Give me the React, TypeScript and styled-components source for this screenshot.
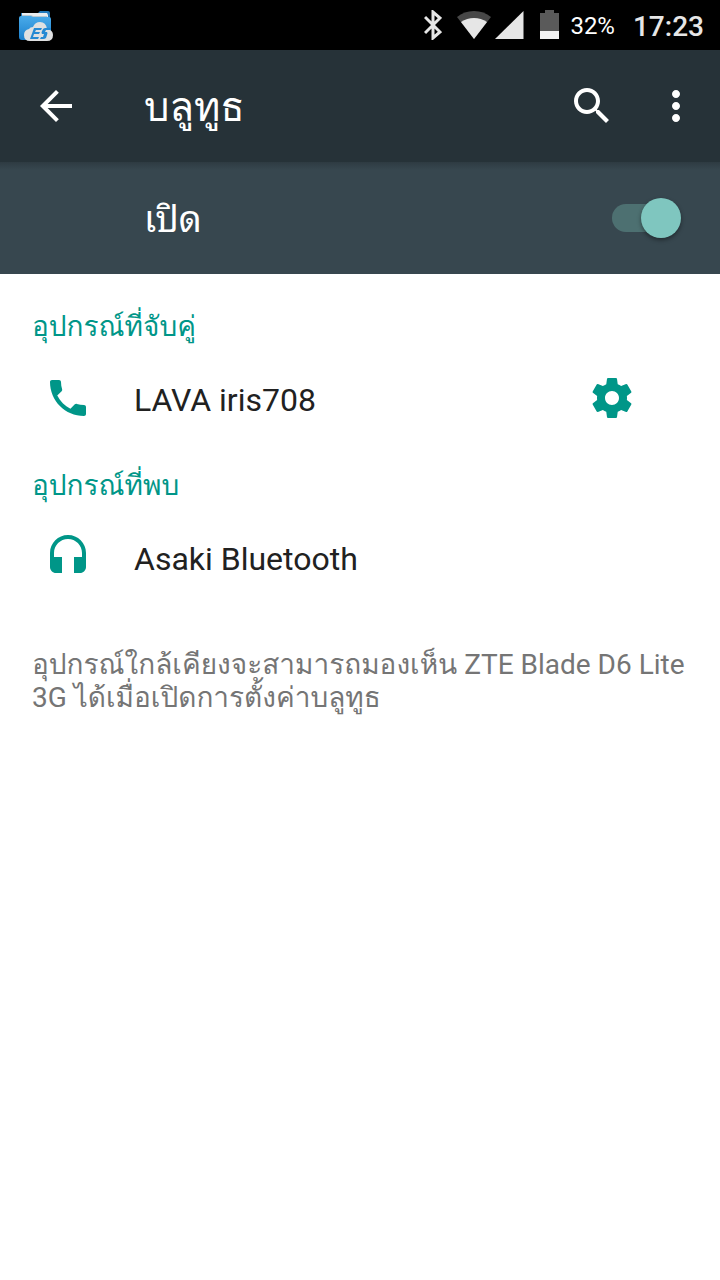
import React, { useState } from "react";
import styled, { createGlobalStyle } from "styled-components";

const GlobalStyle = createGlobalStyle`
  *, *::before, *::after { box-sizing: border-box; }
  body {
    margin: 0;
    background: #ffffff;
    color: #212121;
    font-family: Roboto, Loma, sans-serif;
  }
`;

const Screen = styled.div`
  min-height: 100vh;
  display: flex;
  flex-direction: column;
`;

const StatusBar = styled.div`
  display: flex;
  align-items: center;
  height: 50px;
  padding: 0 16px 0 19px;
  background: #000000;
  color: #e6e6e6;
`;

const StatusIcons = styled.div`
  display: flex;
  align-items: center;
  margin-left: auto;
`;

const StatusGlyph = styled.svg<{ $gap: number }>`
  display: block;
  flex: none;
  margin-right: ${(p) => p.$gap}px;
`;

const BatteryText = styled.span`
  margin-right: 18px;
  padding-top: 2px;
  font-size: 24px;
  line-height: 28px;
  color: #ffffff;
`;

const Clock = styled.time`
  padding-top: 4px;
  font-size: 28px;
  font-weight: 500;
  line-height: 32px;
`;

const AppBar = styled.header`
  display: flex;
  align-items: center;
  height: 112px;
  padding: 0 20px 0 32px;
  background: #263238;
  color: #ffffff;
`;

const Title = styled.h1`
  flex: 1;
  margin: 0 0 0 64px;
  padding-top: 4px;
  font-size: 40px;
  font-weight: 400;
  line-height: 48px;
`;

const IconButton = styled.button<{ $gap?: number; $color?: string }>`
  display: block;
  flex: none;
  width: 48px;
  height: 48px;
  margin: 0 ${(p) => p.$gap ?? 0}px 0 0;
  padding: 0;
  border: 0;
  background: none;
  color: ${(p) => p.$color ?? "inherit"};
  cursor: pointer;
`;

const SwitchBar = styled.label`
  display: flex;
  align-items: center;
  justify-content: space-between;
  height: 112px;
  padding: 0 38px 0 144px;
  background: linear-gradient(#2e3b42, #37474f 8px);
  color: #ffffff;
  cursor: pointer;
`;

const SwitchText = styled.span`
  padding-top: 4px;
  font-family: Roboto, "Noto Sans Thai Looped", Loma, sans-serif;
  font-size: 36px;
  line-height: 44px;
`;

const Toggle = styled.input`
  appearance: none;
  display: flex;
  align-items: center;
  width: 70px;
  height: 28px;
  margin: 0;
  border-radius: 14px;
  background: linear-gradient(#4d7071, #4d7071) left / 60px 28px no-repeat;
  cursor: pointer;

  &::before {
    content: "";
    flex: none;
    width: 40px;
    height: 40px;
    border-radius: 50%;
    background: #b9b9b9;
    box-shadow: 0 2px 4px rgba(0, 0, 0, 0.4);
  }

  &:checked::before {
    margin-left: 29px;
    background: #7fc6bf;
  }
`;

const Content = styled.main`
  display: flex;
  flex-direction: column;
`;

const Section = styled.section`
  padding: 33px 32px 0;

  & + & {
    padding-top: 18px;
  }
`;

const SectionTitle = styled.h2`
  margin: 0;
  color: #009688;
  font-size: 28px;
  font-weight: 400;
  line-height: 40px;
`;

const DeviceRow = styled.div`
  display: flex;
  align-items: center;
  height: 101px;
  padding: 0 52px 0 12px;
`;

const DeviceButton = styled.button`
  display: flex;
  align-items: center;
  flex: 1;
  gap: 42px;
  padding: 0;
  border: 0;
  background: none;
  color: #212121;
  font: inherit;
  font-size: 32px;
  line-height: 40px;
  text-align: left;
  cursor: pointer;
`;

const DeviceName = styled.span`
  padding-top: 4px;
`;

const Note = styled.p`
  margin: 41px 32px;
  color: #757575;
  font-size: 28px;
  line-height: 33px;
`;

const Icon = ({ d, color = "currentColor" }: { d: string; color?: string }) => (
  <svg width="48" height="48" viewBox="0 0 24 24" fill={color} aria-hidden="true">
    <path d={d} />
  </svg>
);

const paths = {
  back: "M20 11H7.83l5.59-5.59L12 4l-8 8 8 8 1.41-1.41L7.83 13H20v-2z",
  search:
    "M15.5 14h-.79l-.28-.27C15.41 12.59 16 11.11 16 9.5 16 5.91 13.09 3 9.5 3S3 5.91 3 9.5 5.91 16 9.5 16c1.61 0 3.09-.59 4.23-1.57l.27.28v.79l5 4.99L20.49 19l-4.99-5zm-6 0C7.01 14 5 11.99 5 9.5S7.01 5 9.5 5 14 7.01 14 9.5 11.99 14 9.5 14z",
  more: "M12 8c1.1 0 2-.9 2-2s-.9-2-2-2-2 .9-2 2 .9 2 2 2zm0 2c-1.1 0-2 .9-2 2s.9 2 2 2 2-.9 2-2-.9-2-2-2zm0 6c-1.1 0-2 .9-2 2s.9 2 2 2 2-.9 2-2-.9-2-2-2z",
  phone:
    "M6.62 10.79c1.44 2.83 3.76 5.14 6.59 6.59l2.2-2.2c.27-.27.67-.36 1.02-.24 1.12.37 2.33.57 3.57.57.55 0 1 .45 1 1V20c0 .55-.45 1-1 1-9.39 0-17-7.61-17-17 0-.55.45-1 1-1h3.5c.55 0 1 .45 1 1 0 1.25.2 2.45.57 3.57.11.35.03.74-.25 1.02l-2.2 2.2z",
  headset:
    "M12 1c-4.97 0-9 4.03-9 9v7c0 1.66 1.34 3 3 3h3v-8H5v-2c0-3.87 3.13-7 7-7s7 3.13 7 7v2h-4v8h3c1.66 0 3-1.34 3-3v-7c0-4.97-4.03-9-9-9z",
  settings:
    "M19.43 12.98c.04-.32.07-.64.07-.98s-.03-.66-.07-.98l2.11-1.65c.19-.15.24-.42.12-.64l-2-3.46c-.12-.22-.39-.3-.61-.22l-2.49 1c-.52-.4-1.08-.73-1.69-.98l-.38-2.65C14.46 2.18 14.25 2 14 2h-4c-.25 0-.46.18-.49.42l-.38 2.65c-.61.25-1.17.59-1.69.98l-2.49-1c-.23-.09-.49 0-.61.22l-2 3.46c-.13.22-.07.49.12.64l2.11 1.65c-.04.32-.07.65-.07.98s.03.66.07.98l-2.11 1.65c-.19.15-.24.42-.12.64l2 3.46c.12.22.39.3.61.22l2.49-1c.52.4 1.08.73 1.69.98l.38 2.65c.03.24.24.42.49.42h4c.25 0 .46-.18.49-.42l.38-2.65c.61-.25 1.17-.59 1.69-.98l2.49 1c.23.09.49 0 .61-.22l2-3.46c.12-.22.07-.49-.12-.64l-2.11-1.65zM12 15.5c-1.93 0-3.5-1.57-3.5-3.5s1.57-3.5 3.5-3.5 3.5 1.57 3.5 3.5-1.57 3.5-3.5 3.5z",
};

const FileExplorerIcon = () => (
  <StatusGlyph $gap={0} width="36" height="32" viewBox="0 0 36 32" aria-hidden="true">
    <defs>
      <linearGradient id="folder" x1="0" y1="0" x2="0" y2="1">
        <stop offset="0" stopColor="#4aabea" />
        <stop offset="1" stopColor="#1c80cd" />
      </linearGradient>
    </defs>
    <path d="M2 4h17l2-2h8q2 0 2 2v20H2z" fill="#2279bb" />
    <path d="M3 4h25l1 2v4H3z" fill="#e9edf0" />
    <path d="M3 6h9l2 1h14v2H3z" fill="#b9c8d2" />
    <path d="M0 9q0-2 2-2h10l2 1h16q2 0 2 2v17q0 4-3 4H3q-3 0-3-3z" fill="url(#folder)" />
    <path d="M11 32q-6 0-6-6 0-5 5-6 1-2 4-2 2-5 7-5 6 0 7 7 6 1 6 6 0 6-6 6z" fill="#dfe0e1" />
    <path d="M15 19h8l-1 2h-5l-1 2h5l-1 2h-5l-1 3h6l-1 2h-8zM26 19h6l-1 2h-4l-1 2h2q1 1 0 3l-1 3q-1 1-3 1h-3l1-2h2l1-3h-2q-1-1 0-3 1-3 3-3z" fill="#2589d3" />
  </StatusGlyph>
);

export default function App() {
  const [on, setOn] = useState(true);
  return (
    <>
      <GlobalStyle />
      <Screen>
        <StatusBar>
          <FileExplorerIcon />
          <StatusIcons>
            <StatusGlyph $gap={15} width="18" height="30" viewBox="0 0 18 30" aria-label="Bluetooth">
              <path d="M1 7l15 15-7 6V2l7 6L1 23" fill="none" stroke="#e6e6e6" strokeWidth="3" />
            </StatusGlyph>
            <StatusGlyph $gap={4} width="34" height="30" viewBox="0 0 34 30" aria-label="Wi-Fi">
              <path d="M17 29L0 7Q7 1 17 1t17 6z" fill="#474747" />
              <path d="M17 29L4 12q6-4 13-4t13 4z" fill="#e6e6e6" />
            </StatusGlyph>
            <StatusGlyph $gap={16} width="29" height="30" viewBox="0 0 29 30" aria-label="Signal">
              <path d="M0 29L28.5 1v28z" fill="#e6e6e6" />
            </StatusGlyph>
            <StatusGlyph $gap={11} width="19" height="30" viewBox="0 0 19 30" aria-label="Battery">
              <path d="M0 3h5V0h9v3h5v26H0z" fill="#5a5a5a" />
              <path d="M0 21h19v8H0z" fill="#f2f2f2" />
            </StatusGlyph>
            <BatteryText>32%</BatteryText>
            <Clock>17:23</Clock>
          </StatusIcons>
        </StatusBar>

        <AppBar>
          <IconButton aria-label="Back">
            <Icon d={paths.back} />
          </IconButton>
          <Title>บลูทูธ</Title>
          <IconButton $gap={36} aria-label="Search">
            <Icon d={paths.search} />
          </IconButton>
          <IconButton aria-label="More">
            <Icon d={paths.more} />
          </IconButton>
        </AppBar>

        <SwitchBar>
          <SwitchText>เปิด</SwitchText>
          <Toggle type="checkbox" role="switch" checked={on} onChange={(e) => setOn(e.target.checked)} />
        </SwitchBar>

        <Content>
          <Section>
            <SectionTitle>อุปกรณ์ที่จับคู่</SectionTitle>
            <DeviceRow>
              <DeviceButton>
                <Icon d={paths.phone} color="#009688" />
                <DeviceName>LAVA iris708</DeviceName>
              </DeviceButton>
              <IconButton $color="#009688" aria-label="Settings">
                <Icon d={paths.settings} />
              </IconButton>
            </DeviceRow>
          </Section>
          <Section>
            <SectionTitle>อุปกรณ์ที่พบ</SectionTitle>
            <DeviceRow>
              <DeviceButton>
                <Icon d={paths.headset} color="#009688" />
                <DeviceName>Asaki Bluetooth</DeviceName>
              </DeviceButton>
            </DeviceRow>
          </Section>
          <Note>อุปกรณ์ใกล้เคียงจะสามารถมองเห็น ZTE Blade D6 Lite 3G ได้เมื่อเปิดการตั้งค่าบลูทูธ</Note>
        </Content>
      </Screen>
    </>
  );
}
